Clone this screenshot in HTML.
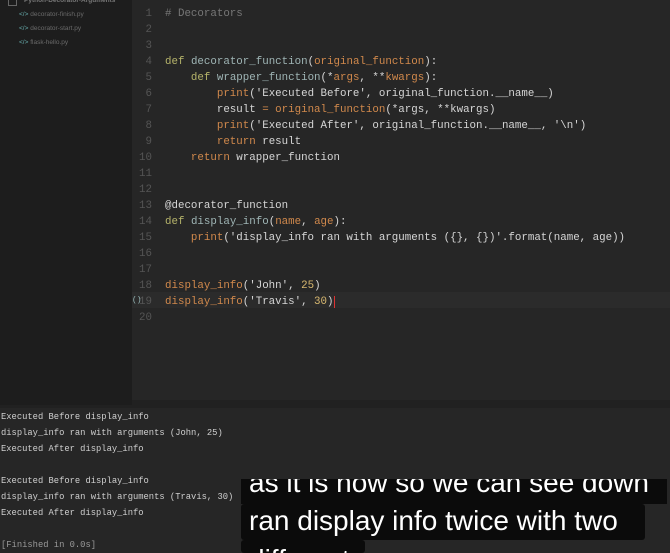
<!DOCTYPE html>
<html><head><meta charset="utf-8"><style>
html,body{margin:0;padding:0;width:670px;height:553px;overflow:hidden;background:#212121;position:relative}
#side{position:absolute;left:0;top:0;width:132px;height:405px;background:#1d1d1d;font:6.5px "Liberation Sans",sans-serif;color:#6a6a6a}
#side div{position:absolute;white-space:nowrap}
#ed{position:absolute;left:132px;top:0;width:538px;height:400px;background:#262626}
.ln{position:absolute;left:0;width:20px;text-align:right;font:10.8px "Liberation Mono",monospace;color:#555}
.cl{position:absolute;left:33px;font:10.8px "Liberation Mono",monospace;color:#d6d6d6;white-space:pre}
.k{color:#b5b36a}.f{color:#9fb5b5}.o{color:#d1894c}.n{color:#d8b870}
#con{position:absolute;left:0;top:408px;width:670px;height:145px;background:#262626}
.c{position:absolute;left:1px;font:8.8px "Liberation Mono",monospace;color:#cfcfcf;white-space:pre}
.cap{position:absolute;background:#0b0b0b;color:#fff;font:28px "Liberation Sans",sans-serif;white-space:nowrap;overflow:hidden;border-radius:3px}
</style></head><body>
<div id="side">
<div style="left:8px;top:-3px;width:7px;height:7px;border:1px solid #666"></div>
<div style="left:24px;top:-3px;font-weight:bold;color:#777">Python-Decorator-Arguments</div>
<div style="left:19px;top:11px;color:#6aa"><span>&lt;/&gt;</span> <span style="color:#6a6a6a">decorator-finish.py</span></div>
<div style="left:19px;top:25px;color:#6aa"><span>&lt;/&gt;</span> <span style="color:#6a6a6a">decorator-start.py</span></div>
<div style="left:19px;top:39px;color:#6aa"><span>&lt;/&gt;</span> <span style="color:#6a6a6a">flask-hello.py</span></div>
</div>
<div id="ed">
<div style="position:absolute;left:0;top:292px;width:538px;height:16px;background:#2b2b2b"></div>
<div class="ln" style="top:8px">1</div><div class="cl" style="top:8px;color:#777"># Decorators</div>
<div class="ln" style="top:24px">2</div>
<div class="ln" style="top:40px">3</div>
<div class="ln" style="top:56px">4</div><div class="cl" style="top:56px"><span class="k">def</span> <span class="f">decorator_function</span>(<span class="o">original_function</span>):</div>
<div class="ln" style="top:72px">5</div><div class="cl" style="top:72px">    <span class="k">def</span> <span class="f">wrapper_function</span>(*<span class="o">args</span>, **<span class="o">kwargs</span>):</div>
<div class="ln" style="top:88px">6</div><div class="cl" style="top:88px">        <span class="o">print</span>('Executed Before', original_function.__name__)</div>
<div class="ln" style="top:104px">7</div><div class="cl" style="top:104px">        result <span class="o">=</span> <span class="o">original_function</span>(*args, **kwargs)</div>
<div class="ln" style="top:120px">8</div><div class="cl" style="top:120px">        <span class="o">print</span>('Executed After', original_function.__name__, '\n')</div>
<div class="ln" style="top:136px">9</div><div class="cl" style="top:136px">        <span class="o">return</span> result</div>
<div class="ln" style="top:152px">10</div><div class="cl" style="top:152px">    <span class="o">return</span> wrapper_function</div>
<div class="ln" style="top:168px">11</div>
<div class="ln" style="top:184px">12</div>
<div class="ln" style="top:200px">13</div><div class="cl" style="top:200px">@decorator_function</div>
<div class="ln" style="top:216px">14</div><div class="cl" style="top:216px"><span class="k">def</span> <span class="f">display_info</span>(<span class="o">name</span>, <span class="o">age</span>):</div>
<div class="ln" style="top:232px">15</div><div class="cl" style="top:232px">    <span class="o">print</span>('display_info ran with arguments ({}, {})'.format(name, age))</div>
<div class="ln" style="top:248px">16</div>
<div class="ln" style="top:264px">17</div>
<div class="ln" style="top:280px">18</div><div class="cl" style="top:280px"><span class="o">display_info</span>('John', <span class="n">25</span>)</div>
<div class="ln" style="top:296px">19</div><div class="cl" style="top:296px"><span class="o">display_info</span>('Travis', <span class="n">30</span>)<span style="border-left:1px solid #d33"></span></div>
<div style="position:absolute;left:0;top:296px;font:8px 'Liberation Mono',monospace;color:#9bb">()</div>
<div class="ln" style="top:312px">20</div>
</div>
<div id="con">
<div class="c" style="top:4px">Executed Before display_info</div>
<div class="c" style="top:20px">display_info ran with arguments (John, 25)</div>
<div class="c" style="top:36px">Executed After display_info</div>
<div class="c" style="top:68px">Executed Before display_info</div>
<div class="c" style="top:84px">display_info ran with arguments (Travis, 30)</div>
<div class="c" style="top:100px">Executed After display_info</div>
<div class="c" style="top:132px;color:#999">[Finished in 0.0s]</div>
</div>
<div class="cap" style="left:241px;top:479px;width:426px;height:25px;border-radius:0"><div style="position:absolute;left:8px;top:-12px">as it is now so we can see down</div></div>
<div class="cap" style="left:241px;top:504px;width:404px;height:36px"><div style="position:absolute;left:8px;top:1px">ran display info twice with two</div></div>
<div class="cap" style="left:241px;top:540px;width:124px;height:13px"><div style="position:absolute;left:8px;top:4px">different</div></div>
</body></html>
